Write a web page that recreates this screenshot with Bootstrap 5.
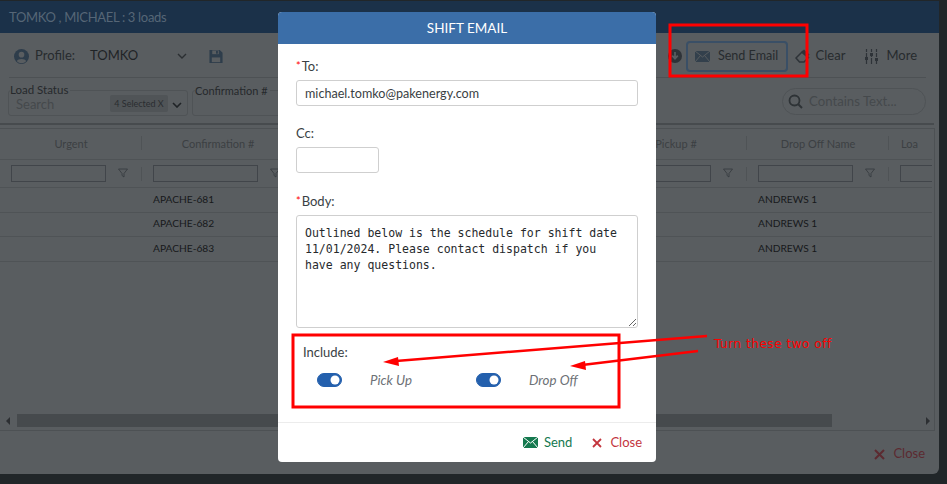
<!DOCTYPE html>
<html lang="en"><head><meta charset="utf-8"><title>Shift Email</title>
<link rel="stylesheet" href="https://cdn.jsdelivr.net/npm/bootstrap@5.3.0/dist/css/bootstrap.min.css">
<style>
html,body{height:484px;overflow:hidden}
body{background:#212629;font-family:Lato,"Liberation Sans",sans-serif;color:#1c1f21;position:relative;width:947px}
.panel{width:939px;height:473px;margin-top:1px;background:#595d60;border-radius:0 0 6px 0;overflow:hidden;display:flex;flex-direction:column}
.ptitle{height:32px;background:#1b3149;color:#566676;font-size:13px;letter-spacing:-.32px;padding:0 9px;line-height:32px;flex:none}
.tbar{height:45px;margin:0 13px 0 9px;border-bottom:1px solid #4d5154;color:#272b2e;font-size:13px;flex:none;padding:2px 9px 0 5px}
.tbar svg{flex:none}
.sendb{width:102px;height:31px;border:2px solid #3a4f66;border-radius:4px;color:#272b2e;font-size:12.6px;margin-left:4px;margin-right:7px}
.filters{height:47px;border-bottom:2px solid #474b4e;flex:none;margin-right:5px;position:relative}
.fbox{position:absolute;top:12px;height:26px;border:1px solid #4f5356;border-radius:3px}
.leg{position:absolute;top:5px;font-size:11.5px;line-height:13px;background:#595d60;padding-right:2px;color:#26292c}
.legb{font-size:11px;top:6px}
.ph{position:absolute;left:16px;top:18px;font-size:13px;line-height:16px;color:#45494c}
.tagx{position:absolute;left:110px;top:17px;width:58px;height:17px;background:#505457;border-radius:2px;font-size:9px;line-height:17px;text-align:center;color:#2a2d30}
.pill{position:absolute;left:782px;top:10px;width:144px;height:27px;border:1px solid #4f5356;border-radius:14px;font-size:13.200px;line-height:25px;padding-left:26px;color:#45494c}
.gridwrap{height:303px;margin:3px 4px 0 0;border:1px solid #4d5154;border-left:0;flex:none;display:flex;flex-direction:column;overflow:hidden}
.tbl-scroll{flex:1;overflow:hidden}
table.gtab{table-layout:fixed;width:932px;margin:0;--bs-table-bg:transparent;--bs-table-color:#1c1f21;border-color:#4d5154}
.gtab th,.gtab td{padding:0 11px;font-size:10.2px;font-weight:400;border-bottom:1px solid #4f5356;vertical-align:middle;white-space:nowrap;overflow:hidden}
.gtab thead tr:first-child th{height:30px;text-align:center;color:#3c4043;font-size:11px;position:relative}
.gtab thead tr:nth-child(2) th{height:28px;position:relative}
.gtab tbody td{height:24px;color:#17191b}
.gtab tbody tr:first-child td{height:25px}
.gtab tbody tr:last-child td{height:25px}
.sep::after{content:"";position:absolute;right:0;top:7px;height:14px;border-right:1px solid #4f5356}
.finp{width:calc(100% - 25px);height:17px;border:1px solid #41454a;display:block}
.lastf{width:120px}
.fun{position:absolute;right:14px;top:8px}
.sbar{height:18px;flex:none;position:relative}
.thumb{position:absolute;left:17px;top:2px;width:815px;height:13px;background:#464a4d}
.larr,.rarr{position:absolute;top:5px;width:0;height:0;border-top:4px solid transparent;border-bottom:4px solid transparent}
.larr{left:6px;border-right:4px solid #2c2f32}.rarr{right:4px;border-left:4px solid #2c2f32}
.pfoot{flex:1;color:#5c2a30;font-size:13px;padding:3px 14px 0 0}
.mwrap{position:absolute;left:278px;top:12px;width:378px;height:450px}
.mcard{height:100%;border:0;border-radius:4px;overflow:hidden;color:#3a3f44}
.mhead{height:32px;background:#3b6ea8;color:#fff;font-size:13.500px;line-height:32px;text-align:center}
.mbody{padding:12px 18px 0;flex:1}
.flabel{font-size:13px;line-height:20px;height:20px;margin:0 0 4px;color:#3a3f44}
.req{color:#f00;font-size:11px;margin-right:1px;vertical-align:1px}
.minp{height:26px;font-size:12.600px;padding:0 8px;border-radius:3px;border-color:#cfcfcf;color:#3a3f44;font-family:inherit}
.cc{width:83px}
.mta{height:113px;resize:both;font-family:"DejaVu Sans Mono","Liberation Mono",monospace;font-size:11.520px;line-height:16px;padding:9px 8px;border-radius:3px;border-color:#cfcfcf;color:#26292c}
.gaprow{margin-bottom:17px}
.gapc{margin-bottom:18px}
.incl{padding:14px 0 0 7px}
.sw{margin:0;padding:0;min-height:0;width:25px;height:14px}
.sw .form-check-input{width:25px;height:14px;margin:0;float:none;display:block;background-color:#2460ad;border-color:#2460ad}
.swl{font-size:13.300px;font-style:italic;color:#6d7176;line-height:16px}
.mfoot{height:40px;border-top:1px solid #ececec;font-size:13px;padding-right:14px;flex:none}
.asend{color:#15794f}.aclose{color:#c3353d}
.anno{position:absolute;left:0;top:0;pointer-events:none}
.turn{position:absolute;left:714px;top:337px;font-family:"DejaVu Sans",sans-serif;font-size:12px;letter-spacing:.55px;line-height:14px;color:#f00;white-space:nowrap}
</style></head>
<body>
<div class="panel">
  <div class="ptitle">TOMKO , MICHAEL : 3 loads</div>
  <div class="tbar d-flex align-items-center">
    <svg width="15" height="15" viewBox="0 0 16 16" style="margin-right:6px"><circle cx="8" cy="8" r="8" fill="#2e3d4b"/><circle cx="8" cy="6" r="3" fill="#595d60"/><path d="M3 13c1-3 9-3 10 0a7 7 0 0 1-10 0z" fill="#595d60"/></svg>
    <span>Profile:</span><span style="width:87px;margin-left:15px;color:#1f2326">TOMKO</span>
    <svg width="10" height="6" viewBox="0 0 10 6"><path d="M1 1l4 4 4-4" fill="none" stroke="#2b2f32" stroke-width="1.400"/></svg>
    <svg width="16" height="15" viewBox="0 0 16 16" style="margin-left:21px"><path d="M1 1h11l3 3v11H1z" fill="#2e3d4b"/><rect x="4" y="1.500" width="7" height="4" fill="#595d60"/><rect x="8" y="2" width="2" height="3" fill="#2e3d4b"/><rect x="3.500" y="9" width="9" height="5" fill="#595d60"/></svg>
    <div class="ms-auto d-flex align-items-center">
      <svg width="14" height="14" viewBox="0 0 16 16"><circle cx="8" cy="8" r="8" fill="#2e3338"/><path d="M8 3.500v7M4.800 7.500L8 11l3.200-3.500" fill="none" stroke="#595d60" stroke-width="2"/></svg>
      <div class="sendb d-flex align-items-center justify-content-center gap-2">
        <svg width="15" height="11" viewBox="0 0 15 11"><path d="M0 0h15v11H0z" fill="#33404c"/><path d="M0 0l7.500 6L15 0M0 11l5.500-6.500M15 11L9.500 4.500" fill="none" stroke="#595d60" stroke-width="1"/></svg>
        <span>Send Email</span>
      </div>
      <svg width="15" height="15" viewBox="0 0 15 15" style="margin-right:6px"><path d="M1 9l6.500-6.500 6 6-4.500 4.500H4.500z" fill="none" stroke="#2e3338" stroke-width="1.500"/><path d="M6 3.500l3-3 5.500 5-2.500 3z" fill="#2e3338"/></svg>
      <span>Clear</span>
      <svg width="15" height="15" viewBox="0 0 15 15" style="margin-left:19px;margin-right:7px"><path d="M2.500 0v15M7.500 0v15M12.500 0v15" stroke="#2e3338" stroke-width="1.200" stroke-dasharray="3 1 4 1 6"/><rect x="1" y="8" width="3" height="3" fill="#2e3338"/><rect x="6" y="4" width="3" height="3" fill="#2e3338"/><rect x="11" y="9" width="3" height="3" fill="#2e3338"/></svg>
      <span>More</span>
    </div>
  </div>
  <div class="filters">
    <div class="fbox" style="left:8px;width:180px"></div>
    <div class="leg" style="left:10px">Load Status</div>
    <div class="ph">Search</div>
    <div class="tagx">4 Selected X</div>
    <svg width="10" height="6" viewBox="0 0 10 6" class="position-absolute" style="left:172px;top:24px"><path d="M1 1l4 4 4-4" fill="none" stroke="#1f2326" stroke-width="1.600"/></svg>
    <div class="fbox" style="left:192px;width:200px"></div>
    <div class="leg legb" style="left:195px">Confirmation #</div>
    <div class="pill">Contains Text...</div>
    <svg width="15" height="15" viewBox="0 0 15 15" class="position-absolute" style="left:788px;top:16px"><circle cx="6.500" cy="6.500" r="5" fill="none" stroke="#2e3336" stroke-width="1.800"/><path d="M10 10l4 4" stroke="#2e3336" stroke-width="2"/></svg>
  </div>
  <div class="gridwrap">
    <div class="tbl-scroll">
      <table class="table gtab">
        <colgroup><col style="width:142px"><col style="width:152px"><col style="width:155px"><col style="width:156px"><col style="width:142px"><col style="width:142px"><col style="width:43px"></colgroup>
        <thead>
          <tr><th class="sep">Urgent</th><th class="sep">Confirmation #</th><th class="sep">Pickup Name</th><th class="sep">Pickup Date</th><th class="sep">Pickup #</th><th class="sep">Drop Off Name</th><th style="padding:0 0 0 12px;text-align:left">Loa</th></tr>
          <tr>
            <th class="sep"><div class="finp"></div><svg class="fun" width="10" height="10" viewBox="0 0 10 10"><path d="M.5 1h9L6 5.500V9L4 7.500V5.500z" fill="none" stroke="#33383c" stroke-width=".8"/></svg></th>
            <th class="sep"><div class="finp"></div><svg class="fun" width="10" height="10" viewBox="0 0 10 10"><path d="M.5 1h9L6 5.500V9L4 7.500V5.500z" fill="none" stroke="#33383c" stroke-width=".8"/></svg></th>
            <th class="sep"><div class="finp"></div></th><th class="sep"><div class="finp"></div></th>
            <th class="sep"><div class="finp"></div><svg class="fun" width="10" height="10" viewBox="0 0 10 10"><path d="M.5 1h9L6 5.500V9L4 7.500V5.500z" fill="none" stroke="#33383c" stroke-width=".8"/></svg></th>
            <th class="sep"><div class="finp"></div><svg class="fun" width="10" height="10" viewBox="0 0 10 10"><path d="M.5 1h9L6 5.500V9L4 7.500V5.500z" fill="none" stroke="#33383c" stroke-width=".8"/></svg></th>
            <th><div class="finp lastf"></div></th>
          </tr>
        </thead>
        <tbody>
          <tr><td></td><td>APACHE-681</td><td></td><td></td><td>2</td><td>ANDREWS 1</td><td></td></tr>
          <tr><td></td><td>APACHE-682</td><td></td><td></td><td>2</td><td>ANDREWS 1</td><td></td></tr>
          <tr><td></td><td>APACHE-683</td><td></td><td></td><td>2</td><td>ANDREWS 1</td><td></td></tr>
        </tbody>
      </table>
    </div>
    <div class="sbar"><span class="larr"></span><div class="thumb"></div><span class="rarr"></span></div>
  </div>
  <div class="pfoot d-flex align-items-center justify-content-end gap-2">
    <svg width="11" height="11" viewBox="0 0 11 11"><path d="M1 1l9 9M10 1l-9 9" stroke="#5c2a30" stroke-width="2"/></svg><span>Close</span>
  </div>
</div>

<div class="mwrap">
  <div class="modal-content mcard d-flex flex-column bg-white">
    <div class="mhead">SHIFT EMAIL</div>
    <div class="mbody">
      <div class="gaprow">
        <div class="flabel"><span class="req">*</span>To:</div>
        <input class="form-control minp" type="text" value="michael.tomko@pakenergy.com">
      </div>
      <div class="gapc">
        <div class="flabel">Cc:</div>
        <input class="form-control minp cc" type="text">
      </div>
      <div>
        <div class="flabel"><span class="req">*</span>Body:</div>
        <textarea class="form-control mta">Outlined below is the schedule for shift date 11/01/2024. Please contact dispatch if you have any questions.</textarea>
      </div>
      <div class="incl">
        <div class="flabel" style="margin-bottom:10px">Include:</div>
        <div class="d-flex align-items-center" style="padding-left:14px">
          <div class="form-check form-switch sw"><input class="form-check-input" type="checkbox" checked></div>
          <span class="swl" style="margin-left:28px;width:106px">Pick Up</span>
          <div class="form-check form-switch sw"><input class="form-check-input" type="checkbox" checked></div>
          <span class="swl" style="margin-left:28px">Drop Off</span>
        </div>
      </div>
    </div>
    <div class="mfoot d-flex align-items-center justify-content-end">
      <svg width="15" height="11" viewBox="0 0 15 11" style="margin-right:6px"><path d="M0 0h15v11H0z" fill="#15794f"/><path d="M0 0l7.500 6L15 0M0 11l5.500-6.500M15 11L9.500 4.500" fill="none" stroke="#fff" stroke-width="1"/></svg>
      <span class="asend">Send</span>
      <svg width="10" height="10" viewBox="0 0 10 10" style="margin-left:20px;margin-right:8px"><path d="M1 1l8 8M9 1L1 9" stroke="#c3353d" stroke-width="1.800"/></svg>
      <span class="aclose">Close</span>
    </div>
  </div>
</div>

<svg class="anno" width="947" height="484" viewBox="0 0 947 484">
  <rect x="670" y="25" width="137" height="51" fill="none" stroke="#f00" stroke-width="3"/>
  <rect x="293" y="335" width="326" height="72" fill="none" stroke="#f00" stroke-width="3"/>
  <path d="M707 336L396 361" stroke="#f00" stroke-width="2.500"/>
  <path d="M383 362l15-5 1 9z" fill="#f00"/>
  <path d="M698 351L582 365" stroke="#f00" stroke-width="2.500"/>
  <path d="M570 366l15-5 1 9z" fill="#f00"/>
</svg>
<div class="turn">Turn these two off</div>
</body></html>
